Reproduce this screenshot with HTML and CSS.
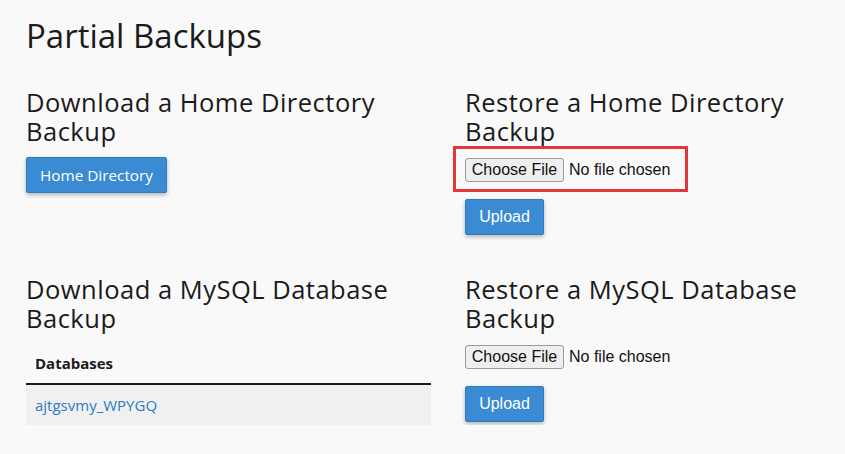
FILE: index.html
```html
<!DOCTYPE html>
<html>
<head>
<meta charset="utf-8">
<title>Partial Backups</title>
<link rel="stylesheet" href="styles.css">
</head>
<body>
<div class="page">
  <h1 class="title">Partial Backups</h1>
  <div class="grid">
    <section class="block">
      <h2 class="heading">Download a Home Directory Backup</h2>
      <button class="btn btn-open">Home Directory</button>
    </section>
    <section class="block">
      <h2 class="heading">Restore a Home Directory Backup</h2>
      <div class="file-wrap">
        <div class="file">
          <span class="file-btn">Choose File</span>
          <span class="file-label">No file chosen</span>
        </div>
        <span class="highlight"></span>
      </div>
      <button class="btn btn-sys">Upload</button>
    </section>
    <section class="block">
      <h2 class="heading">Download a MySQL Database Backup</h2>
      <table class="db-table">
        <thead><tr><th>Databases</th></tr></thead>
        <tbody><tr><td><a href="#" class="db-link">ajtgsvmy_WPYGQ</a></td></tr></tbody>
      </table>
    </section>
    <section class="block">
      <h2 class="heading">Restore a MySQL Database Backup</h2>
      <div class="file-wrap">
        <div class="file">
          <span class="file-btn">Choose File</span>
          <span class="file-label">No file chosen</span>
        </div>
      </div>
      <button class="btn btn-sys">Upload</button>
    </section>
  </div>
</div>
</body>
</html>
```
FILE: styles.css
```css
html, body {
  margin: 0;
  padding: 0;
  background: #f9f9f9;
}
body {
  font-family: "Open Sans", sans-serif;
  color: #1b1b1b;
}
.page {
  padding: 16px 0 0 26px;
}
.title {
  margin: 0;
  font-size: 33px;
  line-height: 40px;
  font-weight: 400;
}
.grid {
  display: grid;
  grid-template-columns: 405px 380px;
  column-gap: 34px;
  row-gap: 40px;
  margin-top: 32px;
}
.block {
  display: flex;
  flex-direction: column;
  align-items: flex-start;
}
.heading {
  margin: 0;
  font-size: 25.5px;
  letter-spacing: 0.5px;
  line-height: 29px;
  font-weight: 400;
}
.btn {
  height: 36px;
  border: 1px solid #2f7bc0;
  border-radius: 2px;
  background: #3a8bd3;
  color: #fff;
  font-size: 16px;
  box-shadow: 0 2px 4px rgba(0, 0, 0, 0.28);
  cursor: pointer;
  padding: 0;
  white-space: nowrap;
}
.btn-open {
  font-family: "Open Sans", sans-serif;
  font-size: 15.3px;
  font-weight: 500;
  margin-top: 11px;
  width: 141px;
}
.btn-sys {
  font-family: "Liberation Sans", Arial, sans-serif;
  width: 79px;
  margin-top: 17px;
}
.file-wrap {
  position: relative;
  margin-top: 12px;
}
.file {
  display: flex;
  align-items: center;
  font-family: "Liberation Sans", Arial, sans-serif;
  font-size: 16px;
  color: #111;
}
.file-btn {
  box-sizing: border-box;
  width: 99px;
  height: 24px;
  line-height: 22px;
  text-align: center;
  background: #efefef;
  border: 1px solid #9a9a9a;
  border-radius: 3px;
}
.file-label {
  margin-left: 5px;
}
.highlight {
  position: absolute;
  left: -12px;
  top: -12px;
  width: 235px;
  height: 46px;
  box-sizing: border-box;
  border: 3px solid #e5363a;
}
.db-table {
  margin-top: 10px;
  width: 405px;
  border-collapse: collapse;
  font-size: 15px;
  line-height: 20px;
}
.db-table th {
  text-align: left;
  font-weight: 700;
  padding: 10px 9px;
  border-bottom: 2px solid #1b1b1b;
}
.db-table td {
  background: #f0f0f0;
  padding: 10px 9px;
}
.db-link {
  color: #2b7bc6;
  text-decoration: none;
  font-size: 15px;
}
```
